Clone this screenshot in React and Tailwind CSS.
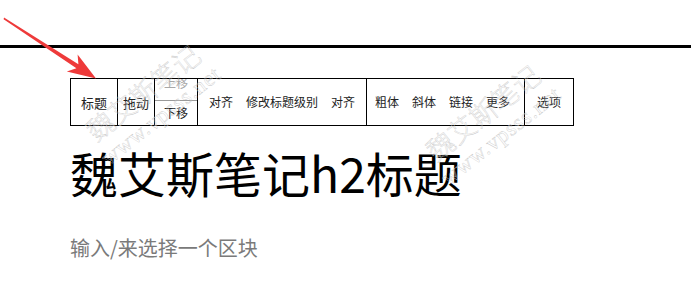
import React from 'react';

const font = { fontFamily: '"Noto Sans CJK SC", "Noto Sans", sans-serif' };

// faint diagonal watermark laid over the page
function Watermark({ className }) {
  return (
    <div className={`pointer-events-none absolute -translate-x-1/2 -translate-y-1/2 rotate-[-38deg] flex flex-col items-center leading-[30px] text-transparent [-webkit-text-stroke:0.35px_#c4c4c4] font-light ${className}`}>
      <span className="text-[27px]">魏艾斯笔记</span>
      <span className="text-[22px] font-['Liberation_Serif',serif] tracking-[1px]">www.vpsss.net</span>
    </div>
  );
}

function Arrow() {
  return (
    <svg className="pointer-events-none absolute left-0 top-0" width="110" height="90" viewBox="0 0 110 90">
      <polygon
        points="4,17.6 78.4,64.2 77.6,54.4 96,78.5 66.8,71.4 76.4,68.2 3.6,19.2"
        fill="#ee3a3a"
      />
    </svg>
  );
}

export default function App() {
  return (
    <div className="relative w-[691px] h-[301px] bg-white overflow-hidden" style={font}>
      <div className="pt-[45px]">
        <div className="h-[3px] bg-black" />
      </div>

      {/* block toolbar */}
      <div className="pl-[70px] pt-[30px]">
        <div className="flex w-fit h-[48px] border border-black divide-x divide-black text-[12px] text-[#222] leading-none">
          <div className="w-[47px] flex items-center justify-center text-[13px]">标题</div>
          <div className="w-[37px] flex items-center justify-center text-[13px]">拖动</div>
          <div className="w-[43px] flex flex-col">
            <div className="h-[22px] overflow-hidden flex justify-center border-b border-[#9a9a9a]">
              <span className="mt-[-2px] text-[#a8a8a8]">上移</span>
            </div>
            <div className="flex-1 flex items-center justify-center">下移</div>
          </div>
          <div className="w-[169px] flex items-center pl-[11px] gap-[13px]">
            <span>对齐</span>
            <span>修改标题级别</span>
            <span>对齐</span>
          </div>
          <div className="w-[158px] flex items-center pl-[8px] gap-[13px]">
            <span>粗体</span>
            <span>斜体</span>
            <span>链接</span>
            <span>更多</span>
          </div>
          <div className="w-[48px] flex items-center justify-center">选项</div>
        </div>
      </div>

      <h2 className="pl-[70px] mt-[22px] text-[48px] leading-none text-black">魏艾斯笔记h2标题</h2>

      <p className="pl-[70px] mt-[42px] text-[20px] leading-none text-[#7a7a7a]">输入/来选择一个区块</p>

      <Watermark className="left-[152px] top-[104px]" />
      <Watermark className="left-[492px] top-[124px]" />
      <Arrow />
    </div>
  );
}
